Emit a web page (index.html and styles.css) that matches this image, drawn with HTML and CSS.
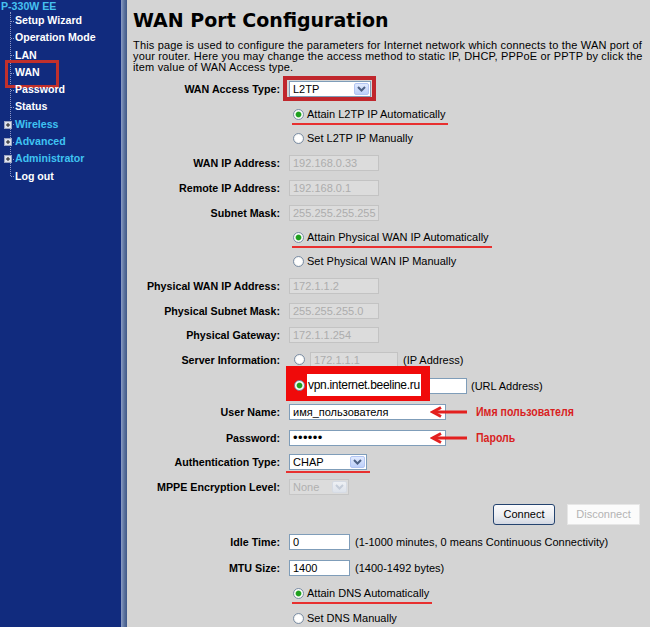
FILE: index.html
```html
<!DOCTYPE html>
<html lang="en">
<head>
<meta charset="utf-8">
<title>WAN Port Configuration</title>
<link rel="stylesheet" href="styles.css">
</head>
<body>
<div class="page">
  <nav class="sidebar">
    <div class="brand">P-330W EE</div>
    <ul class="tree">
      <li class="item">Setup Wizard</li>
      <li class="item">Operation Mode</li>
      <li class="item">LAN</li>
      <li class="item active">WAN</li>
      <li class="item">Password</li>
      <li class="item">Status</li>
      <li class="item group"><svg class="plus" width="8" height="8" viewBox="0 0 8 8"><rect x="0.5" y="0.5" width="7" height="7" fill="#dfe3ee" stroke="#9aa3bf"/><path d="M2 4H6M4 2V6" stroke="#1a1a1a"/></svg>Wireless</li>
      <li class="item group"><svg class="plus" width="8" height="8" viewBox="0 0 8 8"><rect x="0.5" y="0.5" width="7" height="7" fill="#dfe3ee" stroke="#9aa3bf"/><path d="M2 4H6M4 2V6" stroke="#1a1a1a"/></svg>Advanced</li>
      <li class="item group"><svg class="plus" width="8" height="8" viewBox="0 0 8 8"><rect x="0.5" y="0.5" width="7" height="7" fill="#dfe3ee" stroke="#9aa3bf"/><path d="M2 4H6M4 2V6" stroke="#1a1a1a"/></svg>Administrator</li>
      <li class="item last">Log out</li>
    </ul>
  </nav>
  <div class="divider"></div>
  <main class="content">
    <h1 class="title">WAN Port Configuration</h1>
    <p class="intro">This page is used to configure the parameters for Internet network which connects to the WAN port of<br>your router. Here you may change the access method to static IP, DHCP, PPPoE or PPTP by click the<br>item value of WAN Access type.</p>

    <div class="form">
      <div class="row h26">
        <div class="label">WAN Access Type:</div>
        <div class="value">
          <div class="select boxed w82"><span>L2TP</span><span class="sel-btn"><svg width="9" height="6" viewBox="0 0 9 6"><path d="M1 1L4.5 4.5L8 1" fill="none" stroke="#4d6185" stroke-width="2"/></svg></span></div>
        </div>
      </div>

      <div class="row h24">
        <div class="label"></div>
        <div class="value"><span class="option marked"><span class="radio on"></span>Attain L2TP IP Automatically</span></div>
      </div>
      <div class="row h24">
        <div class="label"></div>
        <div class="value"><span class="option"><span class="radio"></span>Set L2TP IP Manually</span></div>
      </div>

      <div class="row">
        <div class="label">WAN IP Address:</div>
        <div class="value"><span class="field off w90">192.168.0.33</span></div>
      </div>
      <div class="row">
        <div class="label">Remote IP Address:</div>
        <div class="value"><span class="field off w90">192.168.0.1</span></div>
      </div>
      <div class="row">
        <div class="label">Subnet Mask:</div>
        <div class="value"><span class="field off w90">255.255.255.255</span></div>
      </div>

      <div class="row">
        <div class="label"></div>
        <div class="value"><span class="option marked"><span class="radio on"></span>Attain Physical WAN IP Automatically</span></div>
      </div>
      <div class="row h23">
        <div class="label"></div>
        <div class="value"><span class="option"><span class="radio"></span>Set Physical WAN IP Manually</span></div>
      </div>

      <div class="row">
        <div class="label">Physical WAN IP Address:</div>
        <div class="value"><span class="field off w90">172.1.1.2</span></div>
      </div>
      <div class="row">
        <div class="label">Physical Subnet Mask:</div>
        <div class="value"><span class="field off w90">255.255.255.0</span></div>
      </div>
      <div class="row h24">
        <div class="label">Physical Gateway:</div>
        <div class="value"><span class="field off w90">172.1.1.254</span></div>
      </div>

      <div class="row">
        <div class="label">Server Information:</div>
        <div class="value">
          <span class="radio inset"></span>
          <span class="field off w88 gap5">172.1.1.1</span>
          <span class="hint">(IP Address)</span>
        </div>
      </div>
      <div class="row h27">
        <div class="label"></div>
        <div class="value">
          <span class="radio on inset raised"></span>
          <span class="field w157 gap5"></span>
          <span class="hint tight">(URL Address)</span>
          <div class="callout"><div class="callout-text">vpn.internet.beeline.ru</div></div>
        </div>
      </div>

      <div class="row h26">
        <div class="label">User Name:</div>
        <div class="value">
          <span class="field w157">имя_пользователя</span>
          <svg class="arrow" width="37" height="12" viewBox="0 0 37 12"><path d="M11 1.5L2.5 6L11 10.5" fill="none" stroke="#e3201f" stroke-width="3"/><path d="M3 6H37" stroke="#e3201f" stroke-width="3"/></svg>
          <span class="note">Имя пользователя</span>
        </div>
      </div>
      <div class="row">
        <div class="label">Password:</div>
        <div class="value">
          <span class="field w157"><span class="dots">••••••</span></span>
          <svg class="arrow" width="37" height="12" viewBox="0 0 37 12"><path d="M11 1.5L2.5 6L11 10.5" fill="none" stroke="#e3201f" stroke-width="3"/><path d="M3 6H37" stroke="#e3201f" stroke-width="3"/></svg>
          <span class="note">Пароль</span>
        </div>
      </div>

      <div class="row h24">
        <div class="label">Authentication Type:</div>
        <div class="value">
          <div class="select underlined w78"><span>CHAP</span><span class="sel-btn"><svg width="9" height="6" viewBox="0 0 9 6"><path d="M1 1L4.5 4.5L8 1" fill="none" stroke="#4d6185" stroke-width="2"/></svg></span></div>
        </div>
      </div>
      <div class="row h26">
        <div class="label">MPPE Encryption Level:</div>
        <div class="value">
          <div class="select off w60"><span>None</span><span class="sel-btn"><svg width="9" height="6" viewBox="0 0 9 6"><path d="M1 1L4.5 4.5L8 1" fill="none" stroke="#c4ccd8" stroke-width="2"/></svg></span></div>
        </div>
      </div>

      <div class="actions">
        <button class="btn" type="button">Connect</button>
        <button class="btn off" type="button">Disconnect</button>
      </div>

      <div class="row h27">
        <div class="label">Idle Time:</div>
        <div class="value">
          <span class="field w61">0</span>
          <span class="hint">(1-1000 minutes, 0 means Continuous Connectivity)</span>
        </div>
      </div>
      <div class="row h26">
        <div class="label">MTU Size:</div>
        <div class="value">
          <span class="field w61">1400</span>
          <span class="hint">(1400-1492 bytes)</span>
        </div>
      </div>

      <div class="row">
        <div class="label"></div>
        <div class="value"><span class="option marked"><span class="radio on"></span>Attain DNS Automatically</span></div>
      </div>
      <div class="row h24">
        <div class="label"></div>
        <div class="value"><span class="option"><span class="radio"></span>Set DNS Manually</span></div>
      </div>
    </div>
  </main>
</div>
</body>
</html>
```

FILE: styles.css
```css
* { box-sizing: border-box; }

html, body {
  margin: 0;
  padding: 0;
}

body {
  width: 650px;
  height: 627px;
  overflow: hidden;
  font-family: "Liberation Sans", Arial, sans-serif;
  font-size: 11px;
  color: #000;
  background: #d4d4d4;
}

.page {
  display: flex;
  height: 627px;
}

/* ---------- sidebar ---------- */
.sidebar {
  width: 121px;
  flex: none;
  background: #112b7e;
  color: #fff;
  font-weight: bold;
  font-size: 10.6px;
}

.brand {
  color: #46c2f0;
  height: 12px;
  line-height: 12px;
  padding-left: 1px;
  white-space: nowrap;
}

.tree {
  list-style: none;
  margin: 0;
  padding: 0;
  position: relative;
}

.tree::before {
  content: "";
  position: absolute;
  left: 10px;
  top: 0;
  bottom: 9px;
  border-left: 1px dotted #8d97c4;
}

.item {
  position: relative;
  height: 17.3px;
  line-height: 17.3px;
  padding-left: 15px;
  white-space: nowrap;
}

.item::before {
  content: "";
  position: absolute;
  left: 11px;
  top: 50%;
  width: 3px;
  border-top: 1px dotted #8d97c4;
}

.group { color: #3fc3f2; }

.plus {
  position: absolute;
  left: 4px;
  top: 5px;
}

.active::after {
  content: "";
  position: absolute;
  left: 5px;
  top: -4px;
  width: 48px;
  height: 22px;
  border: 3px solid #c0302c;
}

.divider {
  width: 6px;
  flex: none;
  background: linear-gradient(to right, #8b9cc3, #5a719c 55%, #3f5788);
}

/* ---------- content ---------- */
.content {
  flex: 1;
  padding-left: 6px;
  min-width: 0;
}

.title {
  margin: 9px 0 0;
  font-family: "DejaVu Sans", Verdana, sans-serif;
  font-size: 19px;
  line-height: 22px;
  font-weight: bold;
  white-space: nowrap;
}

.intro {
  margin: 8.5px 0 0;
  font-size: 11px;
  line-height: 11px;
  letter-spacing: 0.16px;
  white-space: nowrap;
}

.form { margin-top: 3.5px; }

.row {
  display: flex;
  align-items: center;
  height: 25px;
}
.h23 { height: 23px; }
.h24 { height: 24px; }
.h26 { height: 26px; }
.h27 { height: 27px; }
.h28 { height: 28px; }

.label {
  width: 147px;
  flex: none;
  text-align: right;
  font-weight: bold;
  font-size: 10.7px;
  white-space: nowrap;
}

.value {
  margin-left: 9px;
  height: 100%;
  display: flex;
  align-items: center;
  position: relative;
  white-space: nowrap;
}

/* radios */
.option {
  display: inline-flex;
  align-items: center;
  gap: 3px;
  margin-left: 4px;
  line-height: 13px;
  position: relative;
}

.marked::after {
  content: "";
  position: absolute;
  left: -1px;
  right: -3px;
  top: calc(100% + 2px);
  height: 2px;
  background: #e8302f;
}

.radio {
  width: 11px;
  height: 11px;
  flex: none;
  border-radius: 50%;
  border: 1px solid #7b8ea6;
  background: radial-gradient(circle, #ffffff 0 45%, #e2e2dc 100%);
}

.radio.on {
  background: radial-gradient(circle, #1f9f1f 0 2.2px, #7ccc7c 2.8px, #ffffff 3.4px, #ffffff 45%, #e2e2dc 100%);
}

.radio.inset { margin-left: 5px; }

.raised {
  position: relative;
  z-index: 2;
}

/* text fields */
.field {
  display: flex;
  align-items: center;
  height: 16px;
  flex: none;
  border: 1px solid #7f9db9;
  background: #fff;
  padding: 0 3px;
  font-size: 11px;
  line-height: 14px;
  overflow: hidden;
}

.field.off {
  background: #dcdcdc;
  border-color: #c3c3c3;
  color: #adadad;
}

.w61 { width: 61px; }
.w88 { width: 88px; }
.w90 { width: 90px; }
.w157 { width: 157px; }
.gap5 { margin-left: 5px; }

.dots {
  font-size: 13px;
  letter-spacing: 0.4px;
}

.hint { margin-left: 5px; }
.hint.tight { margin-left: 4px; }

/* selects */
.select {
  display: flex;
  align-items: center;
  justify-content: space-between;
  height: 16px;
  border: 1px solid #7f9db9;
  background: #fff;
  padding: 0 1px 0 3px;
  position: relative;
}

.w82 { width: 82px; }
.w78 { width: 78px; }
.w60 { width: 60px; }

.sel-btn {
  width: 15px;
  height: 12px;
  display: flex;
  align-items: center;
  justify-content: center;
  border: 1px solid #b2c5f3;
  border-radius: 2px;
  background: linear-gradient(#e1eafe, #bccffa);
}

.select.off {
  background: #dcdcdc;
  border-color: #c6c6c6;
  color: #b0b0b0;
}

.select.off .sel-btn {
  border-color: #d6dbe4;
  background: linear-gradient(#eef0f4, #dde2ea);
}

.boxed::after {
  content: "";
  position: absolute;
  left: -7px;
  right: -6px;
  top: -6px;
  bottom: -5px;
  border: 4px solid #c0262c;
}

.underlined::after {
  content: "";
  position: absolute;
  left: -4px;
  right: -4px;
  top: calc(100% + 2px);
  height: 2px;
  background: #e8302f;
}

/* annotations */
.callout {
  position: absolute;
  left: -3px;
  top: -6px;
  width: 144px;
  height: 35px;
  background: #f00a0a;
  padding: 8px 9px 5px 21px;
  z-index: 1;
}

.callout-text {
  height: 100%;
  background: #fff;
  padding-left: 1px;
  font-size: 12px;
  letter-spacing: -0.3px;
  line-height: 22px;
  color: #000;
}

.arrow {
  flex: none;
  margin-left: -16px;
}

.note {
  display: inline-block;
  margin-left: 9px;
  color: #d91f1f;
  font-family: "Liberation Sans", Arial, sans-serif;
  font-weight: bold;
  font-size: 12px;
  transform: scaleX(0.88);
  transform-origin: left center;
}

/* buttons */
.actions {
  display: flex;
  justify-content: flex-end;
  align-items: center;
  gap: 12px;
  height: 28px;
  padding-right: 10px;
}

.btn {
  height: 21px;
  width: 62px;
  padding: 0;
  font-family: "Liberation Sans", Arial, sans-serif;
  font-size: 11px;
  color: #000;
  border: 1px solid #24436f;
  border-radius: 3px;
  background: linear-gradient(#fbfbfd, #eceef2 55%, #d3d8e2);
}

.btn.off {
  width: 73px;
  color: #b3b3b3;
  border: 1px solid #e6e6e6;
  border-radius: 0;
  background: #fbfbfb;
}
```
